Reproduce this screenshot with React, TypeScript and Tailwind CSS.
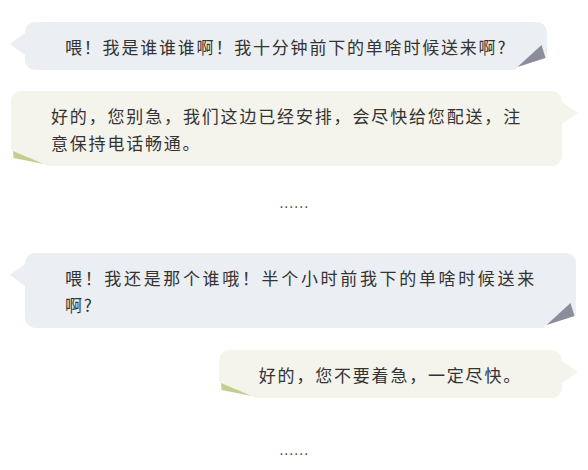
import React from 'react';

type Msg = { side: 'left' | 'right'; text: string };

const GreyCurl = () => (
  <svg className="absolute right-0 bottom-0" width="32" height="26" viewBox="0 0 32 26">
    <polygon points="0,26 2.5,23 30.5,14 32,14 32,26" fill="#ffffff" />
    <polygon points="26.5,1 30.5,14 2.5,23" fill="#8b8d9a" />
  </svg>
);

const GreenCurl = () => (
  <svg className="absolute left-0 bottom-0" width="36" height="17" viewBox="0 0 36 17">
    <polygon points="0,0 2,2 33,15 36,17 0,17" fill="#ffffff" />
    <polygon points="2,2 2.5,9 33,15" fill="#c6cc8e" />
  </svg>
);

const Bubble: React.FC<Msg> = ({ side, text }) => {
  if (side === 'left') {
    return (
      <div className="relative ml-[15px] w-fit max-w-[551px] rounded-[10px] bg-[#ebeef2] py-[10.5px] pl-[40px] pr-[40px]">
        <span className="absolute left-[-15px] top-[11px] h-0 w-0 border-y-[11px] border-r-[15px] border-y-transparent border-r-[#ebeef2]" />
        <p className="text-justify text-[17px] leading-[27px] tracking-[1.8px] text-[#333333]">{text}</p>
        <GreyCurl />
      </div>
    );
  }
  return (
    <div className="relative ml-auto mr-[16px] w-fit max-w-[551px] rounded-[10px] bg-[#f4f4ec] py-[10.5px] pl-[40px] pr-[40px]">
      <span className="absolute right-[-16px] top-[11px] h-0 w-0 border-y-[11px] border-l-[16px] border-y-transparent border-l-[#f4f4ec]" />
      <p className="text-justify text-[17px] leading-[27px] tracking-[1.8px] text-[#333333]">{text}</p>
      <GreenCurl />
    </div>
  );
};

const Dots = ({ className }: { className: string }) => (
  <div className={`text-center font-['Liberation_Sans',sans-serif] text-[16px] leading-[27px] tracking-[0.5px] text-[#555555] ${className}`}>
    ......
  </div>
);

export default function App() {
  return (
    <div className="h-[470px] w-[588px] overflow-hidden bg-white px-[10px] pt-[22px] font-['Noto_Sans_CJK_SC','Noto_Sans',sans-serif]">
      <Bubble side="left" text="喂！我是谁谁谁啊！我十分钟前下的单啥时候送来啊?" />
      <div className="mt-[21px]">
        <Bubble side="right" text="好的，您别急，我们这边已经安排，会尽快给您配送，注意保持电话畅通。" />
      </div>
      <Dots className="mt-[23px]" />
      <div className="mt-[37px]">
        <Bubble side="left" text="喂！我还是那个谁哦！半个小时前我下的单啥时候送来啊?" />
      </div>
      <div className="mt-[22px]">
        <Bubble side="right" text="好的，您不要着急，一定尽快。" />
      </div>
      <Dots className="mt-[38px]" />
    </div>
  );
}
